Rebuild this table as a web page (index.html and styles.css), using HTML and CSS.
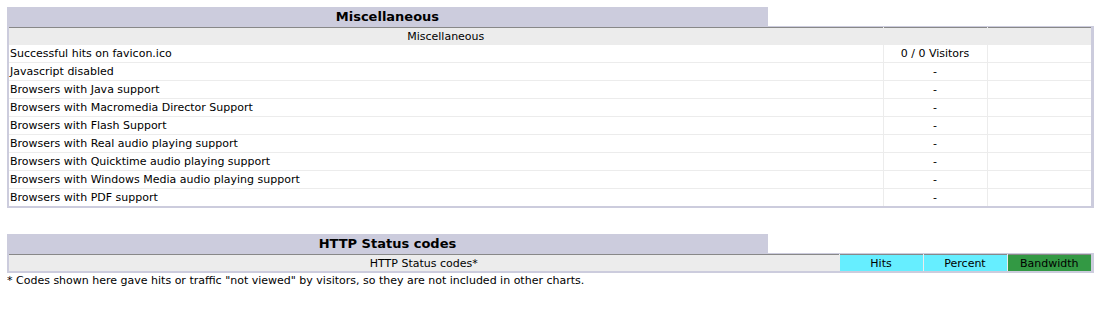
FILE: index.html
```html
<!DOCTYPE html>
<html lang="en">
<head>
    <meta charset="UTF-8">
    <title>Statistics - Miscellaneous</title>
    <link rel="stylesheet" href="styles.css">
</head>
<body>
    <!-- Miscellaneous section -->
    <div class="section">
        <div class="section-head">
            <div class="section-title">Miscellaneous</div>
            <div class="section-blank"></div>
        </div>
        <div class="section-body">
            <table class="data misc">
                <colgroup>
                    <col class="col-label">
                    <col class="col-value">
                    <col class="col-value">
                </colgroup>
                <tr class="head-row">
                    <th>Miscellaneous</th>
                    <th></th>
                    <th></th>
                </tr>
                <tr><td class="label">Successful hits on favicon.ico</td><td>0 / 0 Visitors</td><td></td></tr>
                <tr><td class="label">Javascript disabled</td><td>-</td><td></td></tr>
                <tr><td class="label">Browsers with Java support</td><td>-</td><td></td></tr>
                <tr><td class="label">Browsers with Macromedia Director Support</td><td>-</td><td></td></tr>
                <tr><td class="label">Browsers with Flash Support</td><td>-</td><td></td></tr>
                <tr><td class="label">Browsers with Real audio playing support</td><td>-</td><td></td></tr>
                <tr><td class="label">Browsers with Quicktime audio playing support</td><td>-</td><td></td></tr>
                <tr><td class="label">Browsers with Windows Media audio playing support</td><td>-</td><td></td></tr>
                <tr><td class="label">Browsers with PDF support</td><td>-</td><td></td></tr>
            </table>
        </div>
    </div>

    <!-- HTTP status codes section -->
    <div class="section">
        <div class="section-head">
            <div class="section-title">HTTP Status codes</div>
            <div class="section-blank"></div>
        </div>
        <div class="section-body">
            <table class="data codes">
                <colgroup>
                    <col class="col-code">
                    <col class="col-metric">
                    <col class="col-metric">
                    <col class="col-metric">
                </colgroup>
                <tr class="head-row">
                    <th>HTTP Status codes*</th>
                    <th class="hits">Hits</th>
                    <th class="hits">Percent</th>
                    <th class="bytes">Bandwidth</th>
                </tr>
            </table>
        </div>
    </div>
    <p class="note">* Codes shown here gave hits or traffic "not viewed" by visitors, so they are not included in other charts.</p>
</body>
</html>
```

FILE: styles.css
```css
/* Page font and margins */
body {
    margin: 7px 3px 8px 7px;
    font: 11px "DejaVu Sans", Verdana, sans-serif;
    color: #000000;
}
/* Each report block */
.section {
    margin-bottom: 26px;
}
.section:last-of-type {
    margin-bottom: 0;
}
/* Title band on the left, blank space on the right */
.section-head {
    display: flex;
}
.section-title {
    width: 70%;
    height: 19px;
    line-height: 19px;
    background-color: #ccccdd;
    font-size: 13px;
    font-weight: bold;
    text-align: center;
}
.section-blank {
    flex: 1;
    background-color: #ffffff;
}
/* Lavender frame around the data table */
.section-body {
    background-color: #ccccdd;
    padding: 1px 3px 2px 2px;
}
/* Data table */
.data {
    width: 100%;
    table-layout: fixed;
    border-collapse: collapse;
    border-top: 1px solid #888888;
    background-color: #ffffff;
}
.data th, .data td {
    padding: 2px 1px;
    line-height: 13px;
    font-weight: normal;
    text-align: center;
    border-right: 1px solid #ececec;
    border-bottom: 1px solid #ececec;
    white-space: nowrap;
}
.data tr:last-child > * {
    border-bottom: none;
}
.data th:last-child, .data td:last-child {
    border-right: none;
}
.head-row th {
    padding: 2px 1px 1px 1px;
    background-color: #ececec;
}
.data td.label {
    text-align: left;
}
/* Column widths */
.col-value {
    width: 104px;
}
.col-metric {
    width: 84px;
}
/* Coloured column headers */
.data th.hits {
    background-color: #66eeff;
}
.data th.bytes {
    background-color: #339944;
}
/* Footnote under the codes table */
.note {
    margin: 0;
    padding-top: 1px;
    line-height: 14px;
}
```
